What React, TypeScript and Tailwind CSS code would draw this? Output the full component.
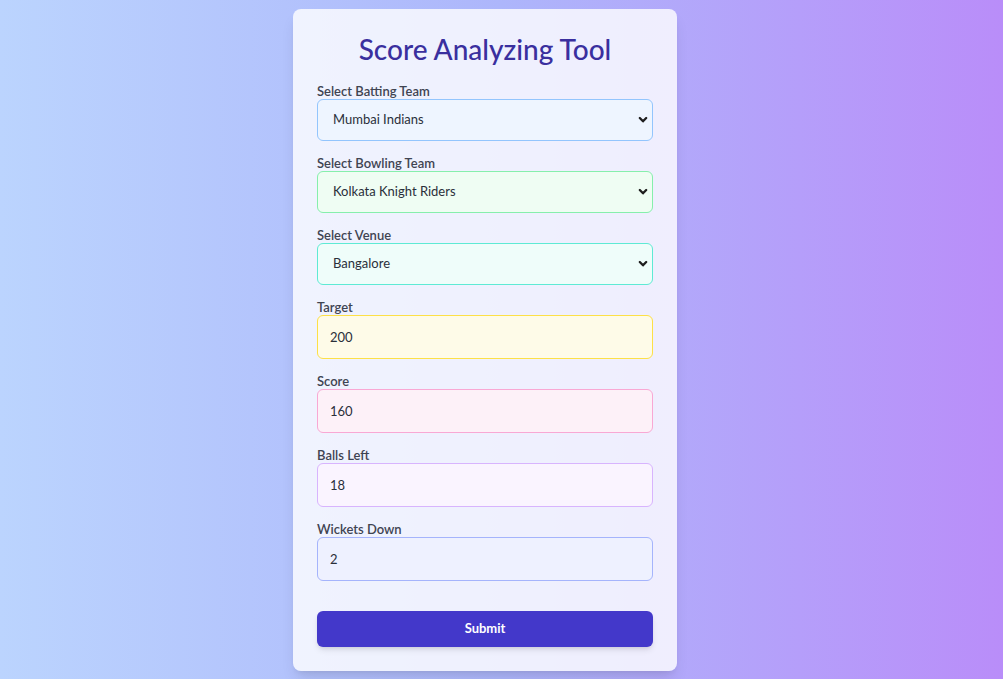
import React from "react";

const Chevron = () => (
  <svg
    className="pointer-events-none absolute right-[5px] top-1/2 -translate-y-1/2"
    width="10"
    height="7"
    viewBox="0 0 10 7"
    fill="none"
  >
    <path d="M1.8 1.5 L5 4.8 L8.2 1.5" stroke="#1f1f1f" strokeWidth="2.3" strokeLinecap="round" strokeLinejoin="round" />
  </svg>
);

function SelectField({
  label,
  value,
  options,
  cls,
}: {
  label: string;
  value: string;
  options: string[];
  cls: string;
}) {
  return (
    <div className="flex flex-col">
      <label className="block text-[13px] leading-4 font-semibold text-[#3f4452]">{label}</label>
      <div className="relative">
        <select
          defaultValue={value}
          className={
            "h-[42px] w-full appearance-none rounded-md border pl-[15px] pr-8 text-[13px] text-[#2a2f3a] outline-none " +
            cls
          }
        >
          {options.map((o) => (
            <option key={o}>{o}</option>
          ))}
        </select>
        <Chevron />
      </div>
    </div>
  );
}

function InputField({ label, value, cls }: { label: string; value: string; cls: string }) {
  return (
    <div className="flex flex-col">
      <label className="block text-[13px] leading-4 font-semibold text-[#3f4452]">{label}</label>
      <input
        type="number"
        defaultValue={value}
        className={
          "h-[44px] w-full rounded-md border px-3 text-[13px] text-[#2a2f3a] outline-none " + cls
        }
      />
    </div>
  );
}

export default function App() {
  return (
    <div
      className="flex min-h-screen items-center justify-center pr-[33px] bg-gradient-to-r from-[#bbd4fe] via-[#adb6fb] to-[#b98df9]"
      style={{ fontFamily: 'Lato, "Noto Sans", sans-serif' }}
    >
      <div className="w-[384px] rounded-lg bg-white/80 px-6 pt-6 pb-6 shadow-lg">
        <h1 className="text-center text-[28px] leading-8 font-medium text-[#3a2f9e] mb-[18px]">
          Score Analyzing Tool
        </h1>
        <div className="flex flex-col gap-[14px]">
          <SelectField
            label="Select Batting Team"
            value="Mumbai Indians"
            options={["Mumbai Indians", "Chennai Super Kings", "Kolkata Knight Riders"]}
            cls="border-[#93c5fd] bg-[#eef5ff]"
          />
          <SelectField
            label="Select Bowling Team"
            value="Kolkata Knight Riders"
            options={["Mumbai Indians", "Chennai Super Kings", "Kolkata Knight Riders"]}
            cls="border-[#86efac] bg-[#effdf3]"
          />
          <SelectField
            label="Select Venue"
            value="Bangalore"
            options={["Bangalore", "Mumbai", "Kolkata"]}
            cls="border-[#5eead4] bg-[#effdfa]"
          />
          <InputField label="Target" value="200" cls="border-[#fde047] bg-[#fefbe8]" />
          <InputField label="Score" value="160" cls="border-[#f9a8d4] bg-[#fdf1f8]" />
          <InputField label="Balls Left" value="18" cls="border-[#d8b4fe] bg-[#faf4ff]" />
          <InputField label="Wickets Down" value="2" cls="border-[#a5b4fc] bg-[#eef1ff]" />
        </div>
        <button className="mt-[30px] h-9 w-full rounded-md bg-[#4338ca] text-[13px] font-bold text-white shadow-md">
          Submit
        </button>
      </div>
    </div>
  );
}
